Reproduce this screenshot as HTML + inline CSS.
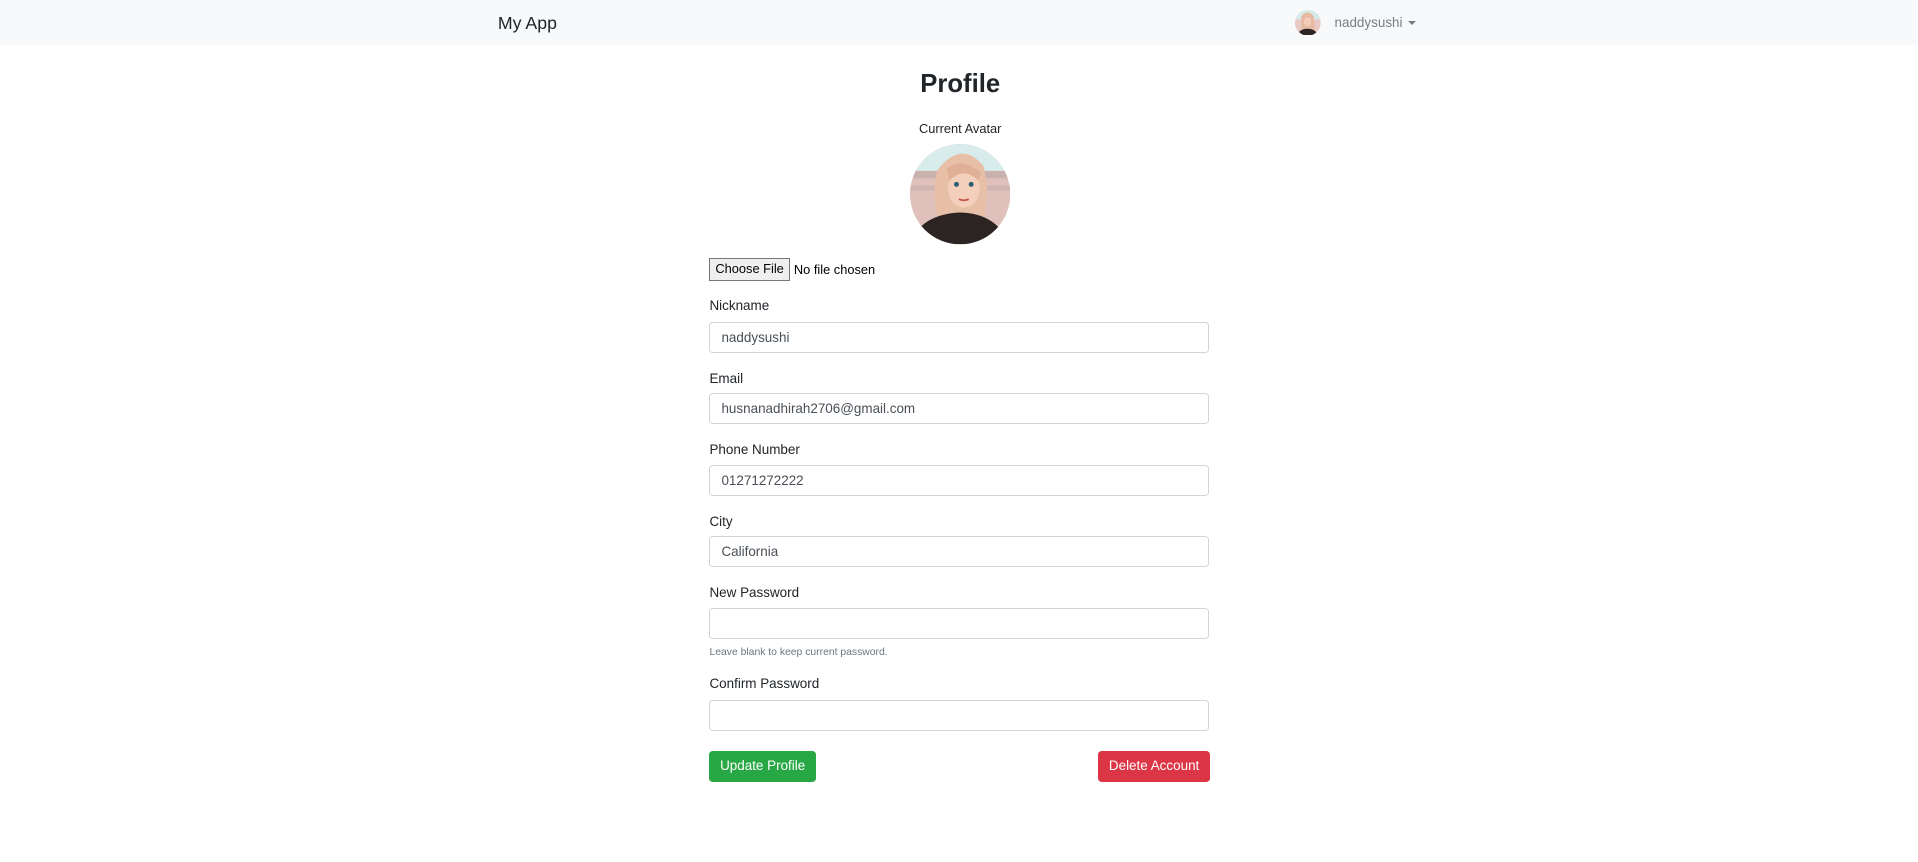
<!DOCTYPE html>
<html><head><meta charset="utf-8">
<style>
html,body{margin:0;padding:0;width:1918px;height:862px;overflow:hidden;background:#fff}
#w{zoom:1.22321;position:relative;width:1568px;height:705px;font-family:"Liberation Sans",sans-serif;color:#212529}
.a{position:absolute;white-space:nowrap}
.nav{position:absolute;left:0;top:0;width:1568px;height:37px;background:#f8f9fa}
.lbl{position:absolute;left:580px;font-size:11px}
.inp{position:absolute;left:580px;width:407px;height:24px;border:1px solid #ced4da;border-radius:3px;background:#fff;font-size:11px;color:#495057;line-height:25px;text-indent:9px}
.btn{position:absolute;top:614px;height:25px;border-radius:3px;color:#fff;font-size:11px;line-height:25px;text-align:center}
</style></head><body><div id="w">
<div class="nav"></div>
<div class="a" style="left:407px;top:11px;font-size:14.5px;color:#212529">My App</div>
<svg class="a" style="left:1059px;top:8px" width="21" height="21" viewBox="0 0 82 82"><defs><clipPath id="c1"><circle cx="41" cy="41" r="41"/></clipPath></defs><g clip-path="url(#c1)"><rect width="82" height="82" fill="#e9c9c4"/><rect width="82" height="30" fill="#d6ebe9"/><path d="M20 20 Q40 -5 60 20 L62 70 L22 70Z" fill="#e6b9a0"/><ellipse cx="40" cy="38" rx="12" ry="15" fill="#f3cdb8"/><path d="M5 82 Q15 60 40 60 Q65 60 75 82Z" fill="#2e2624"/></g></svg>
<div class="a" style="left:1091px;top:12px;font-size:11px;color:#7a7d80">naddysushi</div>
<div class="a" style="left:1151px;top:17px;width:0;height:0;border-left:3.5px solid transparent;border-right:3.5px solid transparent;border-top:4px solid #7a7d80"></div>

<div class="a" style="left:685px;width:200px;text-align:center;top:57px;font-size:21px;font-weight:bold">Profile</div>
<div class="a" style="left:685px;width:200px;text-align:center;top:99px;font-size:10.5px">Current Avatar</div>
<svg class="a" style="left:744px;top:118px" width="82" height="82" viewBox="0 0 82 82"><defs><clipPath id="c2"><circle cx="41" cy="41" r="41"/></clipPath></defs><g clip-path="url(#c2)"><rect width="82" height="82" fill="#dfc0bb"/><rect width="82" height="22" fill="#d8eceb"/><rect y="22" width="82" height="6" fill="#c9b2ae"/><rect y="34" width="82" height="4" fill="#cfb5b1"/><path d="M22 22 Q42 -4 60 18 Q66 40 60 62 L28 72 Q16 50 22 22Z" fill="#e7bfa6"/><ellipse cx="44" cy="36" rx="13" ry="16" fill="#f4cfbb"/><path d="M30 20 Q44 10 58 24 L56 30 Q44 18 32 30Z" fill="#e0b096"/><circle cx="38" cy="33" r="2" fill="#2a5e73"/><circle cx="50" cy="33" r="2" fill="#2a5e73"/><path d="M40 45 Q44 47 48 45" stroke="#c2544a" stroke-width="1.5" fill="none"/><path d="M0 82 Q8 58 40 56 Q70 56 82 82Z" fill="#2c2422"/></g></svg>

<div class="a" style="left:580px;top:211px;width:64px;height:17px;border:1px solid #767676;background:#efefef;font-size:10.5px;line-height:17px;text-align:center;color:#000">Choose File</div>
<div class="a" style="left:649px;top:214px;font-size:10.5px;color:#000">No file chosen</div>

<div class="lbl" style="top:244px">Nickname</div>
<div class="inp" style="top:263px">naddysushi</div>
<div class="lbl" style="top:303px">Email</div>
<div class="inp" style="top:321px">husnanadhirah2706@gmail.com</div>
<div class="lbl" style="top:361px">Phone Number</div>
<div class="inp" style="top:380px">01271272222</div>
<div class="lbl" style="top:420px">City</div>
<div class="inp" style="top:438px">California</div>
<div class="lbl" style="top:478px">New Password</div>
<div class="inp" style="top:497px"></div>
<div class="lbl" style="top:529px;font-size:8.5px;color:#6c757d">Leave blank to keep current password.</div>
<div class="lbl" style="top:553px">Confirm Password</div>
<div class="inp" style="top:572px"></div>

<div class="btn" style="left:580px;width:87px;background:#28a745">Update Profile</div>
<div class="btn" style="left:898px;width:91px;background:#dc3545">Delete Account</div>
</div></body></html>
